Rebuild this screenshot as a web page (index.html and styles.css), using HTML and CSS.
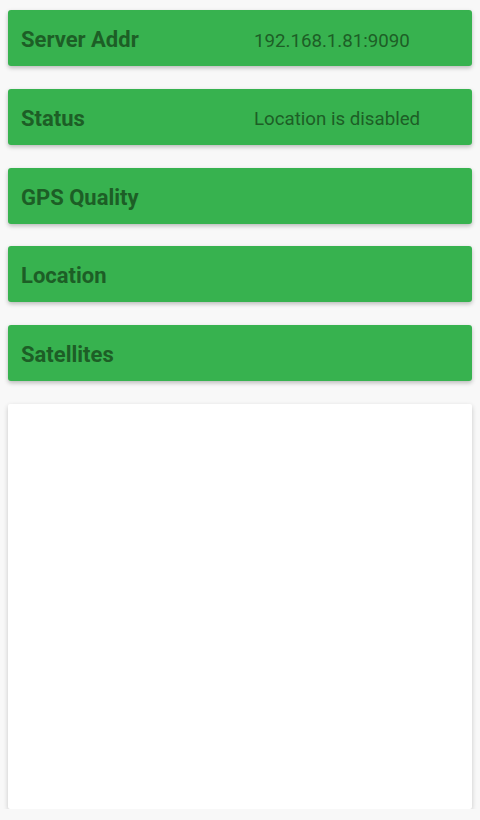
FILE: index.html
```html
<!DOCTYPE html>
<html lang="en">
<head>
  <meta charset="UTF-8">
  <meta name="viewport" content="width=device-width, initial-scale=1.0">
  <title>GPS Server</title>
  <link rel="stylesheet" href="styles.css">
</head>
<body>
  <div class="container">
    <div class="row">
      <span class="label">Server Addr</span>
      <span class="value">192.168.1.81:9090</span>
    </div>
    <div class="row">
      <span class="label">Status</span>
      <span class="value">Location is disabled</span>
    </div>
    <div class="row">
      <span class="label">GPS Quality</span>
      <span class="value"></span>
    </div>
    <div class="row">
      <span class="label">Location</span>
      <span class="value"></span>
    </div>
    <div class="row">
      <span class="label">Satellites</span>
      <span class="value"></span>
    </div>
    <div class="panel"></div>
  </div>
</body>
</html>
```

FILE: styles.css
```css
body {
  font-family: Roboto, "Noto Sans", sans-serif;
  margin: 0;
  padding: 0;
  background-color: #f8f8f8;
  color: #1d5e26;
}
.container {
  display: flex;
  flex-direction: column;
  gap: 22.75px;
  padding: 10px 8px 0;
}
.row {
  box-sizing: border-box;
  display: grid;
  grid-template-columns: 1fr 1fr;
  column-gap: 28px;
  align-items: center;
  height: 56px;
  padding: 3px 13px 0;
  background: #37b24f;
  border-radius: 3px;
  box-shadow: 0 2px 4px rgba(0, 0, 0, 0.25);
}
.label {
  font-size: 22px;
  font-weight: 700;
}
.value {
  font-size: 18.7px;
  margin-top: 2px;
}
.panel {
  height: 405px;
  background: #fff;
  border-radius: 2px;
  box-shadow: 0 2px 5px rgba(0, 0, 0, 0.2);
}
```
